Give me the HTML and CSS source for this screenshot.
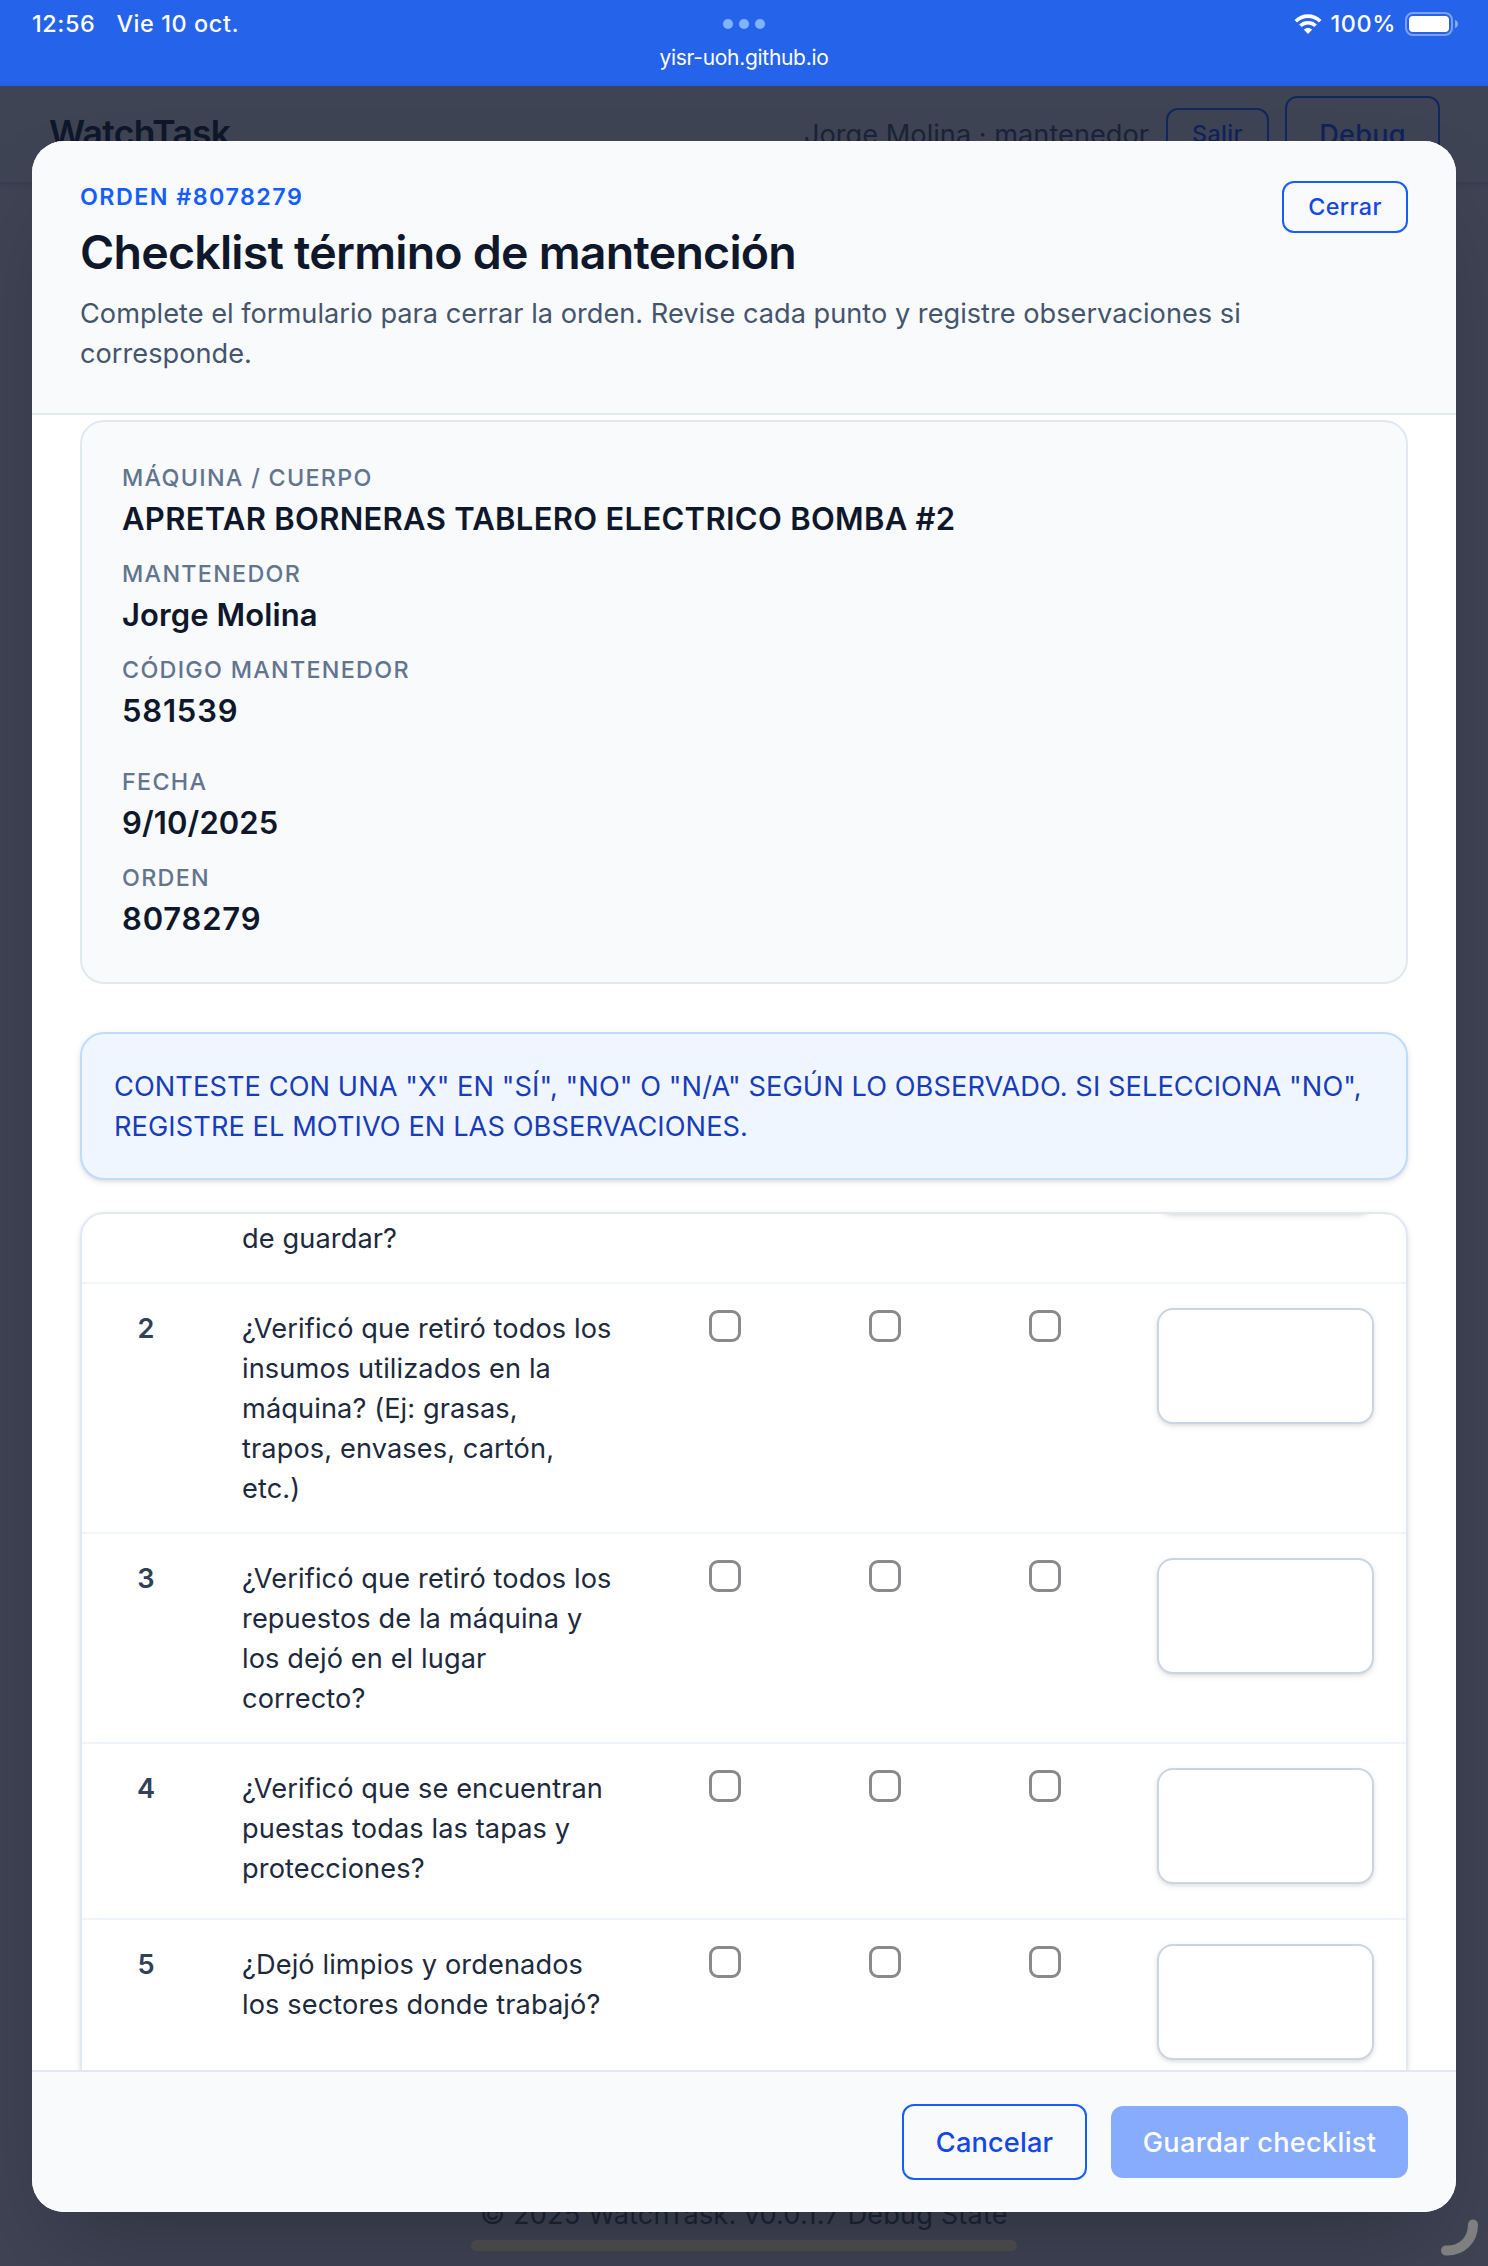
FILE: index.html
```html
<!DOCTYPE html>
<html lang="es">
<head>
<meta charset="utf-8">
<title>WatchTask</title>
<link rel="stylesheet" href="styles.css">
</head>
<body>
<div class="screen">
  <header class="status">
    <div class="status-left"><span class="clock">12:56</span><span class="date">Vie 10 oct.</span></div>
    <div class="status-mid">
      <div class="dots"><i></i><i></i><i></i></div>
      <span class="host">yisr-uoh.github.io</span>
    </div>
    <div class="status-right">
      <svg class="wifi" viewBox="0 0 28 20" width="28" height="20"><path d="M1.8 7.2C8.6.4 19.4.4 26.2 7.2" fill="none" stroke="#fff" stroke-width="3.6"/><path d="M6.4 11.7c4.3-4 10.900-4 15.200 0" fill="none" stroke="#fff" stroke-width="3.500"/><path d="M14 20l-4.300-4.400c2.500-2.200 6.100-2.200 8.600 0z" fill="#fff"/></svg>
      <span class="percent">100%</span>
      <svg class="battery" viewBox="0 0 54 24" width="54" height="24"><rect x="1" y="1" width="46" height="22" rx="7" fill="none" stroke="#fff" stroke-opacity=".4" stroke-width="2"/><rect x="4" y="4" width="40" height="16" rx="4" fill="#fff"/><path d="M50 8c4 1 4 7 0 8z" fill="#fff" fill-opacity=".45"/></svg>
    </div>
  </header>

  <div class="page">
    <nav class="topbar">
      <span class="brand">WatchTask</span>
      <span class="user">Jorge Molina · mantenedor</span>
      <span class="btn btn-sm salir"><span>Salir</span></span>
      <span class="btn debug"><span>Debug</span></span>
    </nav>
    <footer class="credits"><span>© 2025 WatchTask. v0.0.1.7 Debug State</span></footer>
  </div>

  <main class="modal">
    <section class="modal-head">
      <div class="head-text">
        <p class="eyebrow"><span>ORDEN #8078279</span></p>
        <h1><span>Checklist término de mantención</span></h1>
        <p class="lead"><span>Complete el formulario para cerrar la orden. Revise cada punto y registre observaciones si</span><br><span>corresponde.</span></p>
      </div>
      <button class="btn btn-sm cerrar"><span>Cerrar</span></button>
    </section>

    <section class="modal-body">
      <dl class="summary">
        <div class="group">
          <div><dt>MÁQUINA / CUERPO</dt><dd class="machine">APRETAR BORNERAS TABLERO ELECTRICO BOMBA #2</dd></div>
          <div><dt>MANTENEDOR</dt><dd>Jorge Molina</dd></div>
          <div><dt>CÓDIGO MANTENEDOR</dt><dd class="number">581539</dd></div>
        </div>
        <div class="group">
          <div><dt>FECHA</dt><dd>9/10/2025</dd></div>
          <div><dt>ORDEN</dt><dd class="number">8078279</dd></div>
        </div>
      </dl>
      <p class="notice">CONTESTE CON UNA "X" EN "SÍ", "NO" O "N/A" SEGÚN LO OBSERVADO. SI SELECCIONA "NO",<br>REGISTRE EL MOTIVO EN LAS OBSERVACIONES.</p>
      <div class="checklist">
        <div class="row row-scrolled"><b></b><p>de guardar?</p><i></i><i></i><i></i><div class="note"></div></div>
        <div class="row"><b>2</b><p>¿Verificó que retiró todos los<br>insumos utilizados en la<br>máquina? (Ej: grasas,<br>trapos, envases, cartón,<br>etc.)</p><i class="box"></i><i class="box"></i><i class="box"></i><div class="note"></div></div>
        <div class="row"><b>3</b><p>¿Verificó que retiró todos los<br>repuestos de la máquina y<br>los dejó en el lugar<br>correcto?</p><i class="box"></i><i class="box"></i><i class="box"></i><div class="note"></div></div>
        <div class="row"><b>4</b><p>¿Verificó que se encuentran<br>puestas todas las tapas y<br>protecciones?</p><i class="box"></i><i class="box"></i><i class="box"></i><div class="note"></div></div>
        <div class="row"><b>5</b><p>¿Dejó limpios y ordenados<br>los sectores donde trabajó?</p><i class="box"></i><i class="box"></i><i class="box"></i><div class="note"></div></div>
      </div>
    </section>

    <section class="modal-foot">
      <button class="btn cancelar"><span>Cancelar</span></button>
      <button class="btn guardar"><span>Guardar checklist</span></button>
    </section>
  </main>

  <div class="home-bar"></div>
  <svg class="corner" viewBox="0 0 40 40" width="40" height="40"><path d="M34 6.500C34 22 23 33 7 32.500" fill="none" stroke="#7f7f7f" stroke-width="10" stroke-linecap="round"/></svg>
</div>
</body>
</html>
```
FILE: styles.css
```css
* { box-sizing: border-box; margin: 0; padding: 0; }
body { font-family: Inter, "Liberation Sans", sans-serif; font-size: 27.2px; line-height: 40px; color: #0f172b; white-space: nowrap; }
button { font-family: inherit; }
.screen { position: relative; width: 1488px; height: 2266px; overflow: hidden; display: flex; flex-direction: column; background: #3f4455; }

.status { height: 86px; flex: none; display: grid; grid-template-columns: 1fr auto 1fr; background: #2563eb; color: #fff; font-size: 23.4px; font-weight: 500; letter-spacing: .6px; }
.status-left { display: flex; gap: 21px; padding: 4px 0 0 32px; }
.status-mid { display: flex; flex-direction: column; align-items: center; padding-top: 19px; }
.dots { display: flex; gap: 6px; }
.dots i { width: 10px; height: 10px; border-radius: 50%; background: #7cb5ff; }
.host { font-size: 21px; font-weight: 400; line-height: 28px; margin-top: 15px; letter-spacing: -.3px; }
.status-right { display: flex; justify-content: flex-end; padding: 4px 29px 0 0; }
.wifi { margin: 10px 8px 0 0; }
.percent { margin-right: 9px; }
.battery { margin-top: 8px; }

.page { flex: 1; display: flex; flex-direction: column; justify-content: space-between; }
.topbar { height: 96px; display: flex; align-items: center; padding: 0 48px 0 49px; background: #3f4454; box-shadow: 0 2px 6px rgba(15, 23, 43, .2); color: #1b2338; }
.brand { font-size: 35.5px; font-weight: 600; color: #0f172b; margin-right: auto; letter-spacing: -.7px; }
.user { margin-right: 17px; padding-top: 2px; }

.btn { display: flex; align-items: center; justify-content: center; border: 2px solid #155dfc; border-radius: 12px; background: transparent; color: #1447e6; font-size: 27.2px; font-weight: 500; height: 76px; flex: none; letter-spacing: .15px; }
.btn-sm { font-size: 23.3px; height: 52px; letter-spacing: .4px; }
.salir { width: 103px; margin-right: 16px; border-color: #11275d; color: #11225a; }
.debug { width: 155px; border-color: #11275d; color: #11225a; padding-top: 1px; }
.credits { height: 96px; display: flex; justify-content: center; padding-top: 25px; color: #1d2436; letter-spacing: .12px; }

.modal { position: absolute; left: 32px; right: 32px; top: 141px; height: 2071px; border-radius: 32px; overflow: hidden; display: flex; flex-direction: column; background: #fff; }
.screen::before { content: ""; position: absolute; left: 32px; right: 32px; top: 141px; height: 2071px; border-radius: 32px; box-shadow: 0 50px 100px -24px rgba(0, 0, 0, .25); }
.modal-head { height: 274px; flex: none; display: flex; justify-content: space-between; align-items: flex-start; padding: 40px 48px 0; background: #f8fafc; border-bottom: 2px solid #e2e8f0; }
.eyebrow { font-size: 23.3px; font-weight: 600; line-height: 32px; letter-spacing: 1.45px; color: #155dfc; }
h1 { font-size: 46.5px; font-weight: 600; line-height: 64px; margin-top: 7px; letter-spacing: -.77px; }
.lead { color: #45556c; margin-top: 10px; }
.cerrar { width: 126px; padding-bottom: 1px; }

.modal-body { flex: 1; min-height: 0; overflow: hidden; padding: 5px 48px 0; }
.summary { border: 2px solid #e2e8f0; border-radius: 24px; background: #f8fafc; padding: 40px; display: flex; flex-direction: column; gap: 32px; }
.group { display: flex; flex-direction: column; gap: 16px; }
dt { font-size: 23.3px; line-height: 32px; font-weight: 500; letter-spacing: 1.3px; color: #62748e; }
dd { font-size: 31px; line-height: 46px; padding-top: 2px; font-weight: 600; letter-spacing: .1px; }
.machine { letter-spacing: .3px; }
.number { letter-spacing: .8px; }
.notice { margin-top: 48px; border: 2px solid #bedbff; border-radius: 24px; background: #eff6ff; color: #193cb8; padding: 33px 32px 31px; letter-spacing: .08px; box-shadow: 0 2px 6px rgba(0, 0, 0, .1), 0 2px 4px -2px rgba(0, 0, 0, .1); }
.checklist { margin-top: 32px; height: 900px; border: 2px solid #e2e8f0; border-radius: 24px; overflow: hidden; box-shadow: 0 2px 6px rgba(0, 0, 0, .1), 0 2px 4px -2px rgba(0, 0, 0, .1); }
.row { display: grid; grid-template-columns: 128px 435px 160px 160px 160px 281px; min-height: 176px; padding: 24px 0; border-bottom: 2px solid #f1f5f9; color: #1d293d; align-items: start; }
.row b { text-align: center; font-weight: 600; color: #314158; padding-top: 1px; }
.row p { padding: 1px 0 0 32px; margin-bottom: -1px; letter-spacing: .1px; }
.row-scrolled { margin-top: -140px; }
.row-scrolled p { padding-top: 121px; }
.box { width: 32px; height: 32px; margin: 2px 0 0 64px; border: 3px solid #8a8a8e; border-radius: 9px; }
.note { height: 116px; margin: 0 32px; border: 2px solid #cad5e2; border-radius: 16px; background: #fff; box-shadow: 0 2px 6px rgba(0, 0, 0, .1), 0 2px 4px -2px rgba(0, 0, 0, .1); }

.modal-foot { height: 142px; flex: none; display: flex; justify-content: flex-end; align-items: center; gap: 24px; padding: 0 48px; background: #f8fafc; border-top: 2px solid #e2e8f0; }
.cancelar { width: 185px; }
.guardar { width: 297px; height: 72px; border: 0; background: #87abfd; color: #fff; letter-spacing: .3px; }

.home-bar { position: absolute; left: 471px; top: 2240px; width: 546px; height: 11px; border-radius: 6px; background: #474747; }
.corner { position: absolute; left: 1439px; top: 2218px; }
```
